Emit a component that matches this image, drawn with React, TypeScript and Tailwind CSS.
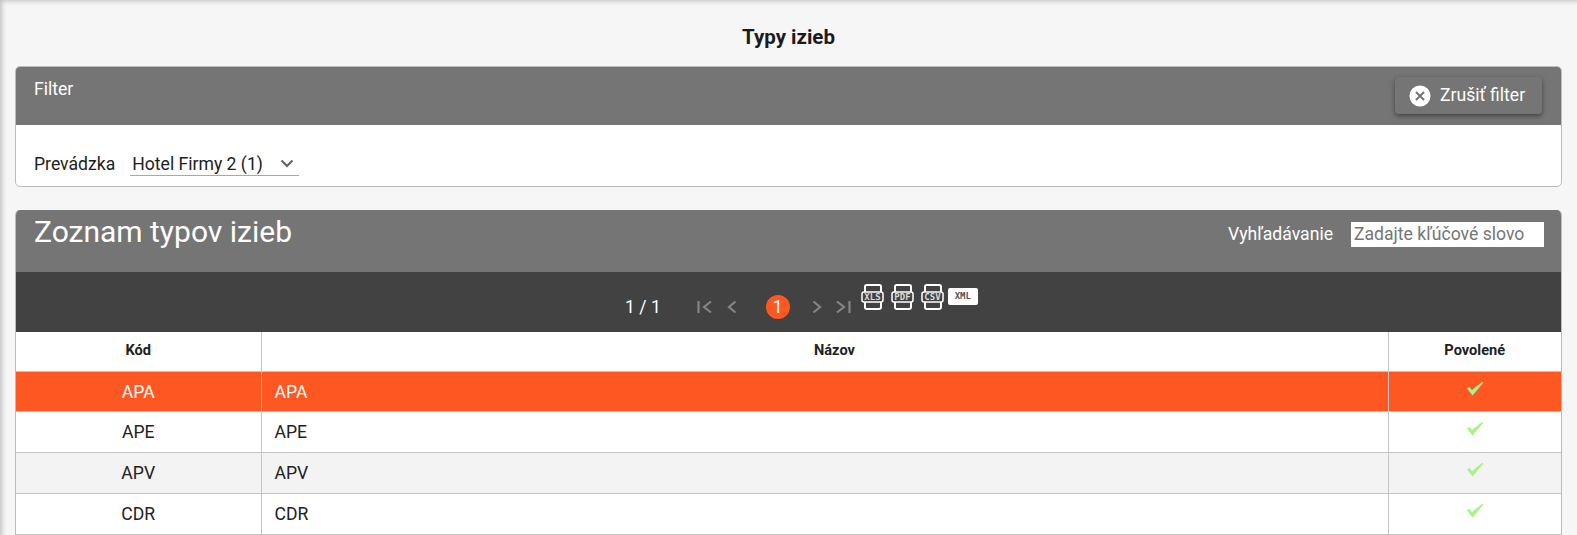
import React from "react";

function FileIcon({ label }: { label: string }) {
  return (
    <svg width="23" height="26" viewBox="0 0 23 26" className="block">
      <path d="M4 8V2.500a1.500 1.500 0 0 1 1.500-1.500h13a1.500 1.500 0 0 1 1.500 1.500v20.500a2 2 0 0 1-2 2h-12.500a1.500 1.500 0 0 1-1.500-1.500V18" fill="none" stroke="#fff" strokeWidth="2" />
      <rect x="1" y="8" width="21" height="10" rx="2" fill="#424242" stroke="#fff" strokeWidth="1.500" />
      <text x="11.500" y="16.300" textAnchor="middle" fontSize="9" fontWeight="700" fill="#d8d8d8" fontFamily="'DejaVu Sans Mono', monospace">{label}</text>
    </svg>
  );
}

function Check() {
  return (
    <svg width="18" height="15" viewBox="0 0 18 15" className="block mx-auto">
      <path d="M1 7.500l2.500-1.500 2.500 3L16 1l1.500.5L6.500 14.500z" fill="#a5f584" />
    </svg>
  );
}

const rows = [
  { c: "APA", active: true },
  { c: "APE" },
  { c: "APV", alt: true },
  { c: "CDR" },
];

export default function App() {
  return (
    <div className="relative h-[535px] overflow-hidden bg-[#f6f6f6] px-[15px] text-[#212121] font-['Roboto',sans-serif] shadow-[inset_4px_3px_5px_-2px_rgba(0,0,0,0.22)]">
      <h1 className="h-[66px] pt-[24px] text-center text-[20.5px] leading-[26px] font-bold text-[#1b1b1b]">Typy izieb</h1>

      <section className="h-[121px] w-[1547px] overflow-hidden rounded-[5px] border border-[#bdbdbd] bg-white">
        <div className="flex h-[58px] justify-between bg-[#757575] pl-[18px] pr-[19px] text-white">
          <span className="mt-[11px] text-[17.6px] leading-[22px]">Filter</span>
          <button className="mt-[10px] flex h-[37px] w-[147px] items-center rounded-[4px] bg-[#757575] pl-[14px] text-[17.6px] shadow-[0_2px_5px_rgba(0,0,0,0.45)]">
            <svg width="22" height="22" viewBox="0 0 22 22" className="mr-[9px]">
              <circle cx="11" cy="11" r="10.500" fill="#fff" />
              <path d="M7 7l8 8M15 7l-8 8" stroke="#757575" strokeWidth="2" />
            </svg>
            Zrušiť filter
          </button>
        </div>
        <div className="flex items-center pl-[18px] pt-[27px] text-[17.6px] leading-[24px]">
          <span>Prevádzka</span>
          <div className="ml-[15px] flex h-[24px] w-[169px] items-center border-b border-[#a8a8a8] pl-[2px]">
            <span>Hotel Firmy 2 (1)</span>
            <svg width="14" height="9" viewBox="0 0 14 9" className="ml-[17px]">
              <path d="M1.500 1.500L7 7l5.500-5.500" fill="none" stroke="#616161" strokeWidth="2" />
            </svg>
          </div>
        </div>
      </section>

      <section className="mt-[23px] w-[1547px] overflow-hidden rounded-t-[5px] border-x border-[#bdbdbd]">
        <div className="flex h-[62px] items-start justify-between bg-[#757575] pl-[18px] pr-[17px] text-white">
          <span className="mt-[4px] text-[30px] leading-[36px]">Zoznam typov izieb</span>
          <div className="mt-[11px] flex items-center text-[17.6px]">
            <span>Vyhľadávanie</span>
            <input
              readOnly
              placeholder="Zadajte kľúčové slovo"
              className="ml-[18px] h-[25px] w-[193px] bg-white pl-[3px] text-[17.6px] text-[#212121] placeholder:text-[#757575]"
            />
          </div>
        </div>

        <div className="flex h-[60px] items-start bg-[#424242] text-white">
          <span className="ml-[609px] mt-[23px] text-[17.6px] leading-[24px]">1 / 1</span>
          <div className="ml-[35px] mt-[25px] flex items-center">
            <svg width="18" height="20" viewBox="0 0 18 20" className="block">
              <path d="M2.500 4v12M15 4.500L8 10l7 5.500" fill="none" stroke="#858585" strokeWidth="2.200" />
            </svg>
            <svg width="14" height="20" viewBox="0 0 14 20" className="ml-[11px] block">
              <path d="M10.500 4.500L4 10l6.500 5.500" fill="none" stroke="#858585" strokeWidth="2.200" />
            </svg>
          </div>
          <span className="ml-[27px] mt-[23px] flex h-[24px] w-[24px] items-center justify-center rounded-full bg-[#ff5722] text-[17.6px]">1</span>
          <div className="ml-[20px] mt-[25px] flex items-center">
            <svg width="14" height="20" viewBox="0 0 14 20" className="block">
              <path d="M3.500 4.500L10 10l-6.500 5.500" fill="none" stroke="#858585" strokeWidth="2.200" />
            </svg>
            <svg width="18" height="20" viewBox="0 0 18 20" className="ml-[10px] block">
              <path d="M15.500 4v12M3 4.500L10 10l-7 5.500" fill="none" stroke="#858585" strokeWidth="2.200" />
            </svg>
          </div>
          <div className="ml-[9px] mt-[12px] flex items-start gap-[7px]">
            <FileIcon label="XLS" />
            <FileIcon label="PDF" />
            <FileIcon label="CSV" />
            <span className="-ml-[3px] mt-[4px] flex h-[17px] w-[30px] items-center justify-center rounded-[2px] bg-white font-['DejaVu_Sans_Mono',monospace] text-[9px] font-bold text-[#555555]">XML</span>
          </div>
        </div>

        <table className="w-full table-fixed border-collapse text-[17.6px]">
          <colgroup>
            <col className="w-[245px]" />
            <col />
            <col className="w-[173px]" />
          </colgroup>
          <thead>
            <tr className="h-[39px] bg-white text-[14.6px] font-bold">
              <th className="border-r border-b border-[#c4c4c4]">Kód</th>
              <th className="border-x border-b border-[#c4c4c4] pl-[20px]">Názov</th>
              <th className="border-l border-b border-[#c4c4c4]">Povolené</th>
            </tr>
          </thead>
          <tbody>
            {rows.map((r, i) => (
              <tr key={r.c} className={r.active ? "bg-[#ff5722] text-white" : r.alt ? "bg-[#f3f3f3]" : "bg-white"}>
                <td className={`border-r border-b border-[#c4c4c4] pt-[2px] text-center ${i === 0 ? "h-[40px]" : "h-[41px]"}`}>{r.c}</td>
                <td className="border-x border-b border-[#c4c4c4] pl-[13px] pt-[2px]">{r.c}</td>
                <td className="border-l border-b border-[#c4c4c4] pb-[6px]"><Check /></td>
              </tr>
            ))}
          </tbody>
        </table>
      </section>
    </div>
  );
}
